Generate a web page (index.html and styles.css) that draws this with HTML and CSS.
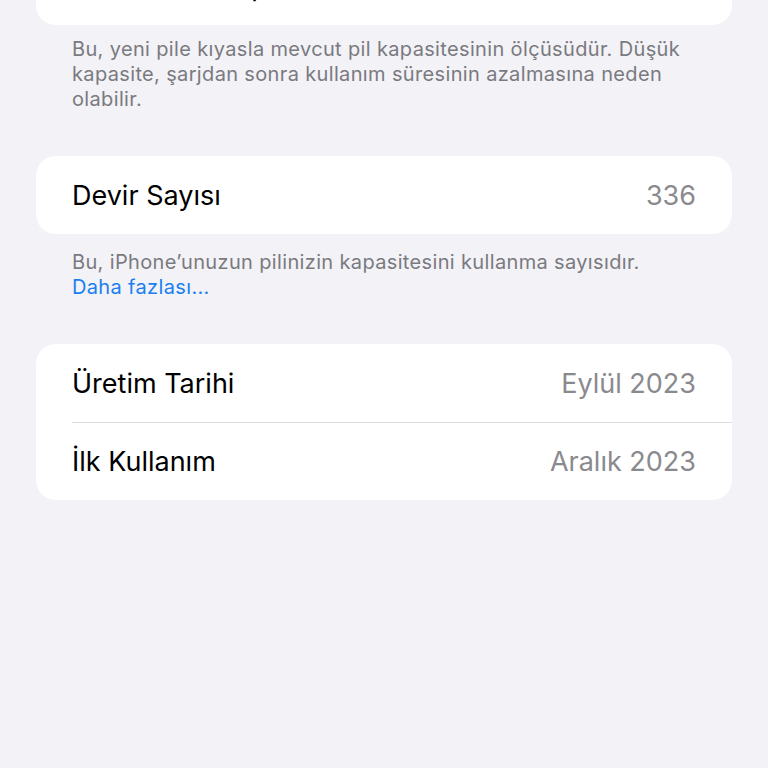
FILE: index.html
```html
<!DOCTYPE html>
<html lang="tr">
<head>
<meta charset="utf-8">
<title>Pil Sağlığı</title>
<link rel="stylesheet" href="styles.css">
</head>
<body>
<main class="page">
  <section class="group group-first">
    <div class="card">
      <div class="row">
        <span class="label">Maksimum Kapasite</span>
        <span class="value">%100</span>
      </div>
    </div>
    <p class="footnote">Bu, yeni pile kıyasla mevcut pil kapasitesinin ölçüsüdür. Düşük kapasite, şarjdan sonra kullanım süresinin azalmasına neden olabilir.</p>
  </section>

  <section class="group group-cycles">
    <div class="card">
      <div class="row">
        <span class="label">Devir Sayısı</span>
        <span class="value">336</span>
      </div>
    </div>
    <p class="footnote">Bu, iPhone’unuzun pilinizin kapasitesini kullanma sayısıdır.<br><a class="link" href="#">Daha fazlası...</a></p>
  </section>

  <section class="group">
    <div class="card">
      <div class="row">
        <span class="label">Üretim Tarihi</span>
        <span class="value">Eylül 2023</span>
      </div>
      <div class="row row-divided">
        <span class="label">İlk Kullanım</span>
        <span class="value">Aralık 2023</span>
      </div>
    </div>
  </section>
</main>
</body>
</html>
```

FILE: styles.css
```css
html, body {
  margin: 0;
  padding: 0;
  background: #f2f2f7;
}

body {
  font-family: Inter, "Noto Sans", "Liberation Sans", sans-serif;
  color: #000;
  -webkit-font-smoothing: antialiased;
}

.page {
  padding: 0 36px;
  display: flex;
  flex-direction: column;
}

.group {
  display: flex;
  flex-direction: column;
  margin-bottom: 44px;
}

.group-first {
  margin-top: -53px;
}

.group-cycles {
  margin-bottom: 44px;
}

.group-cycles .footnote {
  padding-top: 16px;
}

.card {
  background: #fff;
  border-radius: 20px;
  overflow: hidden;
}

.row {
  height: 78px;
  padding: 0 36px;
  display: flex;
  align-items: center;
  justify-content: space-between;
  font-size: 27px;
  letter-spacing: 0;
  position: relative;
}

.row-divided::before {
  content: "";
  position: absolute;
  left: 36px;
  right: 0;
  top: 0;
  height: 1px;
  background: #dcdce0;
}

.label {
  color: #000;
}

.value {
  color: #8a8a8e;
}

.footnote {
  margin: 0;
  padding: 12px 36px 0;
  font-size: 20px;
  line-height: 25px;
  color: #7a7a7f;
  letter-spacing: 0.35px;
}

.link {
  color: #1a7ff0;
  text-decoration: none;
}
```
